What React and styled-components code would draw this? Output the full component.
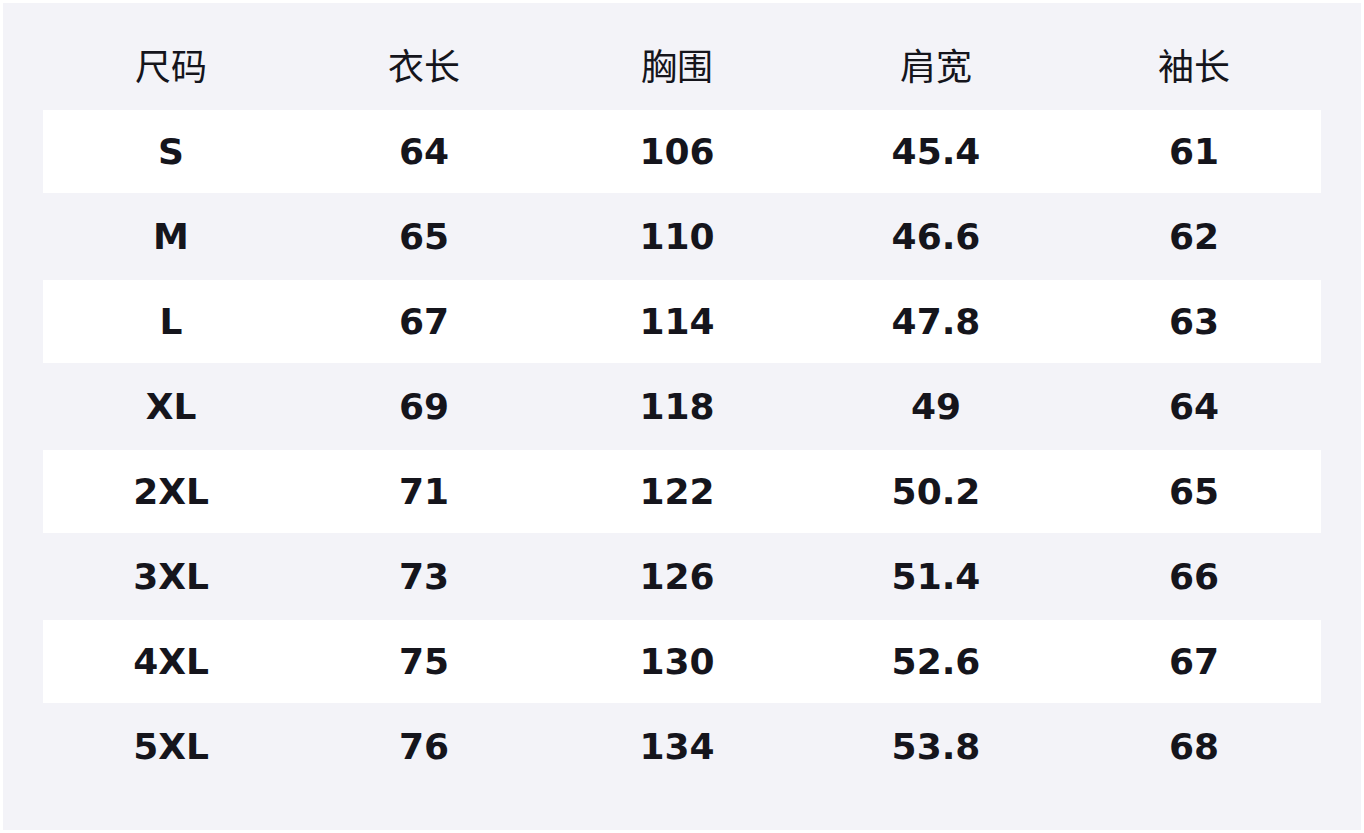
import React from 'react';
import styled, { createGlobalStyle } from 'styled-components';

const GlobalStyle = createGlobalStyle`
  html, body {
    margin: 0;
    padding: 0;
    background: #ffffff;
  }
  body {
    font-family: "DejaVu Sans", "Noto Sans CJK SC", sans-serif;
  }
`;

const columns = ['尺码', '衣长', '胸围', '肩宽', '袖长'];

const rows = [
    ['S', '64', '106', '45.4', '61'],
    ['M', '65', '110', '46.6', '62'],
    ['L', '67', '114', '47.8', '63'],
    ['XL', '69', '118', '49', '64'],
    ['2XL', '71', '122', '50.2', '65'],
    ['3XL', '73', '126', '51.4', '66'],
    ['4XL', '75', '130', '52.6', '67'],
    ['5XL', '76', '134', '53.8', '68'],
];

const GRID = '256px 250px 256px 262px 254px';

const Page = styled.div`
    padding: 3px;
`;

const Panel = styled.div`
    width: 1358px;
    height: 827px;
    box-sizing: border-box;
    padding: 40px;
    background: #f3f3f8;
`;

const HeaderRow = styled.div`
    display: grid;
    grid-template-columns: ${GRID};
    height: 67px;
`;

const HeaderCell = styled.div`
    text-align: center;
    font-family: "Noto Sans CJK SC", sans-serif;
    font-size: 36px;
    line-height: 42px;
    color: #15151c;
`;

const Row = styled.div`
    display: grid;
    grid-template-columns: ${GRID};
    align-items: center;
    height: 83px;
    border-bottom: 2px solid #f3f3f8;
    background: ${p => (p.$striped ? '#ffffff' : 'transparent')};
`;

const Cell = styled.div`
    text-align: center;
    font-family: "DejaVu Sans", sans-serif;
    font-weight: bold;
    font-size: 36px;
    line-height: 40px;
    color: #15151c;
`;

export default function App() {
    return (
        <>
            <GlobalStyle />
            <Page>
                <Panel>
                    <HeaderRow>
                        {columns.map(c => <HeaderCell key={c}>{c}</HeaderCell>)}
                    </HeaderRow>
                    {rows.map((r, i) => (
                        <Row key={r[0]} $striped={i % 2 === 0}>
                            {r.map((v, j) => <Cell key={j}>{v}</Cell>)}
                        </Row>
                    ))}
                </Panel>
            </Page>
        </>
    );
}
